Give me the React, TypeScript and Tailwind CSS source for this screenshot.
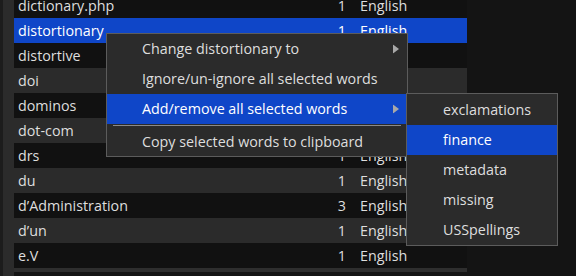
import React from "react";

const rows: { w: string; n: string; sel?: boolean }[] = [
  { w: "dictionary.php", n: "1" },
  { w: "distortionary", n: "1", sel: true },
  { w: "distortive", n: "1" },
  { w: "doi", n: "1" },
  { w: "dominos", n: "1" },
  { w: "dot-com", n: "1" },
  { w: "drs", n: "1" },
  { w: "du", n: "1" },
  { w: "d\u2019Administration", n: "3" },
  { w: "d\u2019un", n: "1" },
  { w: "e.V", n: "1" },
];

function Arrow() {
  return (
    <svg width="6" height="9" viewBox="0 0 6 9" className="absolute right-[8px] top-1/2 -translate-y-1/2">
      <path d="M0 0 L6 4.5 L0 9 Z" fill="#a8a8a8" />
    </svg>
  );
}

export default function App() {
  const font = { fontFamily: '"Open Sans", "Noto Sans", sans-serif' };
  return (
    <div
      className="relative w-[576px] h-[276px] overflow-hidden bg-[#141414] flex text-[14.3px] text-[#dedede]"
      style={font}
    >
      <div className="w-[14px] h-full flex">
        <div className="w-[3px] h-full bg-[#1c1c1c]" />
        <div className="w-[11px] h-full bg-[#2b2b2b]" />
      </div>
      <div className="w-[453px] flex flex-col">
        <div className="flex flex-col mt-[-7px]">
          {rows.map((r, i) => (
            <div
              key={r.w}
              className={
                "h-[25px] flex items-center " +
                (r.sel ? "bg-[#0f46c8] text-white" : i % 2 === 0 ? "bg-[#111111]" : "bg-[#2b2b2b]")
              }
            >
              <div className="flex-1 pl-[4px] whitespace-nowrap">{r.w}</div>
              <div className="w-[20px] text-right">{r.n}</div>
              <div className="w-[121px] pl-[14px]">English</div>
            </div>
          ))}
        </div>
        <div className="h-[4px] bg-[#2e2e2e]" />
      </div>

      {/* main context menu */}
      <div className="absolute left-[106px] top-[33px] w-[302px] h-[124px] bg-[#2b2b2b] border border-[#5c5c5c] flex flex-col">
        <div className="relative h-[30px] flex items-center pl-[35px]">
          Change distortionary to
          <Arrow />
        </div>
        <div className="h-[30px] flex items-center pl-[35px]">Ignore/un-ignore all selected words</div>
        <div className="relative h-[30px] flex items-center pl-[35px] bg-[#0f46c8] text-white">
          Add/remove all selected words
          <Arrow />
        </div>
        <div className="h-[3px] flex items-center px-[6px]">
          <div className="h-[1px] w-full bg-[#8a8a8a]" />
        </div>
        <div className="h-[29px] flex items-center pl-[35px]">Copy selected words to clipboard</div>
      </div>

      {/* submenu */}
      <div className="absolute left-[406px] top-[93px] w-[152px] h-[153px] bg-[#2b2b2b] border border-[#5c5c5c] flex flex-col pt-[1px]">
        {["exclamations", "finance", "metadata", "missing", "USSpellings"].map((s) => (
          <div
            key={s}
            className={
              "h-[30px] flex items-center pl-[36px] " + (s === "finance" ? "bg-[#0f46c8] text-white" : "")
            }
          >
            {s}
          </div>
        ))}
      </div>
    </div>
  );
}
